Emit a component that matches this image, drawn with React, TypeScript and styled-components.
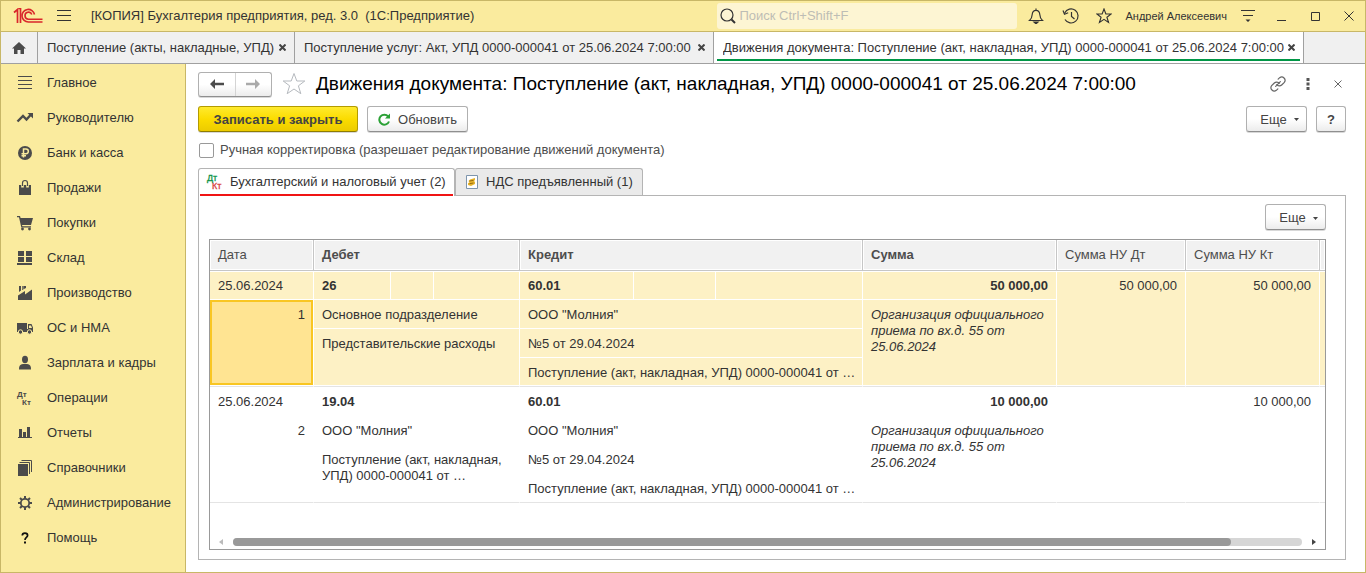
import React from "react";
import styled, { createGlobalStyle, css } from "styled-components";

const c = {
  yellow: "#faeb9e",
  frame: "#c8b767",
  ink: "#333333",
  icon: "#4b4b4b",
  grey: "#a0a0a0",
  line: "#b4b4b4",
  row: "#fdf1c5",
};

const GlobalStyle = createGlobalStyle`
  *, *::before, *::after { box-sizing: border-box; }
  body { margin: 0; background: #fff; }
  body, button, input { font-family: "Liberation Sans", Arial, sans-serif; font-size: 13px; line-height: 16px; color: ${c.ink}; }
  button { margin: 0; padding: 0; border: 0; background: none; cursor: pointer; }
  svg { display: block; flex: none; }
`;

const Window = styled.div`
  display: flex;
  flex-direction: column;
  min-height: 100vh;
  border: 1px solid ${c.frame};
  background: #fff;
`;

const TitleBar = styled.header`
  display: flex;
  align-items: center;
  height: 31px;
  padding-left: 12px;
  background: ${c.yellow};
  border-bottom: 1px solid ${c.frame};
`;

const IconButton = styled.button<{ $w?: number }>`
  display: flex;
  align-items: center;
  justify-content: center;
  width: ${(p) => p.$w ?? 34}px;
  height: 28px;
  flex: none;
`;

const AppTitle = styled.div`
  flex: 1;
  padding-left: 6px;
  white-space: nowrap;
`;

const Search = styled.label`
  display: flex;
  align-items: center;
  gap: 3px;
  width: 300px;
  height: 26px;
  padding: 0 3px;
  border-radius: 3px;
  background: #fdf5d3;
  input {
    flex: 1;
    min-width: 0;
    padding: 0;
    border: 0;
    outline: 0;
    background: none;
  }
  input::placeholder { color: #bdbdb5; opacity: 1; }
`;

const User = styled.button`
  font-size: 11px;
  padding: 0 4px;
  white-space: nowrap;
`;

const TabStrip = styled.nav`
  display: flex;
  height: 32px;
  background: #f0f0f0;
  border-bottom: 1px solid ${c.grey};
`;

const HomeTab = styled.button`
  display: flex;
  align-items: center;
  justify-content: center;
  width: 37px;
  border-right: 1px solid ${c.grey};
`;

const WindowTab = styled.div<{ $active?: boolean; $w: number }>`
  display: flex;
  align-items: center;
  justify-content: space-between;
  flex: 0 1 ${(p) => p.$w}px;
  padding: 0 3px;
  border-right: 1px solid ${c.grey};
  background: ${(p) => (p.$active ? "#fff" : "transparent")};
`;

const TabInner = styled.div<{ $active?: boolean }>`
  display: flex;
  align-items: center;
  justify-content: space-between;
  flex: 1;
  min-width: 0;
  height: 27px;
  padding: 2px 5px 0 6px;
  border-bottom: 2px solid ${(p) => (p.$active ? "#009646" : "transparent")};
  > button:first-child {
    overflow: hidden;
    white-space: nowrap;
  }
`;

const Body = styled.div`
  display: flex;
  flex: 1;
`;

const Sidebar = styled.nav`
  flex: 0 0 185px;
  padding-top: 1px;
  background: ${c.yellow};
  border-right: 1px solid ${c.frame};
`;

const SideItem = styled.a`
  display: flex;
  align-items: center;
  gap: 13px;
  height: 35px;
  padding-left: 15px;
  color: ${c.ink};
  text-decoration: none;
  white-space: nowrap;
`;

const Main = styled.main`
  display: flex;
  flex-direction: column;
  flex: 1;
  min-width: 0;
  padding: 7px 19px 12px 12px;
`;

const Bar = styled.div`
  display: flex;
  align-items: center;
`;

const HeadBar = styled(Bar)`
  height: 26px;
  margin-right: -7px;
`;

const CommandBar = styled(Bar)`
  gap: 9px;
  margin-top: 8px;
  height: 27px;
`;

const Spacer = styled.div`
  flex: 1;
`;

const raised = css`
  border: 1px solid #b0b0b0;
  border-bottom-color: #8f8f8f;
  border-radius: 3px;
  background: linear-gradient(#ffffff 50%, #ececec);
  box-shadow: 0 1px 0 #d8d8d8;
`;

const NavPair = styled.div`
  display: flex;
  width: 74px;
  height: 25px;
  ${raised}
  button {
    display: flex;
    flex: 1;
    align-items: center;
    justify-content: center;
  }
  button + button { border-left: 1px solid #d4d4d4; }
`;

const Title = styled.h1`
  margin: 0;
  font-size: 19px;
  line-height: 24px;
  font-weight: 400;
  color: #000;
  white-space: nowrap;
`;

const Button = styled.button<{ $w: number; $strong?: boolean }>`
  display: flex;
  align-items: center;
  justify-content: center;
  width: ${(p) => p.$w}px;
  height: 26px;
  padding-top: 2px;
  color: #444;
  white-space: nowrap;
  ${raised}
  ${(p) =>
    p.$strong &&
    css`
      font-weight: 700;
      border-color: #b39b00;
      border-bottom-color: #8f7c00;
      background: linear-gradient(#ffea2e, #fbdc00 50%, #eccb00);
    `}
`;

const CheckRow = styled.label`
  display: flex;
  align-items: center;
  gap: 6px;
  height: 36px;
  padding-left: 1px;
  color: #4d4d4d;
  input {
    appearance: none;
    width: 15px;
    height: 15px;
    margin: 0;
    border: 1px solid #999;
    border-radius: 2px;
    background: #fff;
  }
`;

const PageTabs = styled.div`
  display: flex;
  height: 27px;
`;

const PageTab = styled.button<{ $active?: boolean; $w: number }>`
  display: flex;
  align-items: center;
  gap: 6px;
  width: ${(p) => p.$w}px;
  height: ${(p) => (p.$active ? 28 : 27)}px;
  padding: ${(p) => (p.$active ? "0 1px" : "0 8px")};
  border: 1px solid ${c.line};
  border-bottom: 0;
  border-radius: 3px 3px 0 0;
  background: ${(p) => (p.$active ? "#fff" : "#eaeaea")};
  white-space: nowrap;
  z-index: 1;
`;

const PageTabInner = styled.span`
  display: flex;
  align-items: center;
  gap: 6px;
  flex: 1;
  height: 27px;
  padding: 0 6px;
  border-bottom: 2px solid #f01414;
`;

const Panel = styled.section`
  display: flex;
  flex-direction: column;
  flex: 1;
  padding: 8px 19px 9px 10px;
  border: 1px solid ${c.line};
`;

const PanelBar = styled.div`
  display: flex;
  justify-content: flex-end;
  margin-bottom: 9px;
`;

const Grid = styled.div`
  display: flex;
  flex-direction: column;
  flex: 1;
  border: 1px solid #999;
`;

const Table = styled.table`
  width: 100%;
  table-layout: fixed;
  border-collapse: separate;
  border-spacing: 0;
`;

const Col = styled.col<{ $w?: number }>`
  width: ${(p) => (p.$w ? `${p.$w}px` : "auto")};
`;

const Th = styled.th<{ $bold?: boolean }>`
  height: 31px;
  padding: 0 8px;
  text-align: left;
  font-weight: ${(p) => (p.$bold ? 700 : 400)};
  color: #4d4d4d;
  background: #f1f1f1;
  border-right: 1px solid #c6c6c6;
  border-bottom: 1px solid #c6c6c6;
  box-shadow: inset 0 0 0 1px #fff;
  white-space: nowrap;
  &:last-child { padding: 0; border-right: 0; }
`;

const Group = styled.tbody<{ $selected?: boolean }>`
  td {
    height: 29px;
    padding: 7px 8px 5px;
    vertical-align: top;
    overflow: hidden;
    border-right: 1px solid #fff;
    border-bottom: 1px solid #fff;
    background: ${(p) => (p.$selected ? c.row : "#fff")};
  }
  td:last-child[rowspan="4"] { padding: 0; border-right: 0; }
  td[data-end] {
    border-bottom-color: #e4e4e4;
    box-shadow: inset 0 -1px 0 #fff;
  }
  tr:first-child td { box-shadow: inset 0 1px 0 #fff; }
  tr:first-child td[data-end] { box-shadow: inset 0 1px 0 #fff, inset 0 -1px 0 #fff; }
  td[data-num] { text-align: right; }
  td[data-bold] { font-weight: 700; }
  td[data-note] { font-style: italic; }
  td[data-clip] { padding-right: 4px; white-space: nowrap; text-overflow: ellipsis; }
  td[data-current] { padding: 0; }
`;

const Current = styled.div`
  height: 85px;
  padding: 5px 6px;
  border: 2px solid #f9c622;
  background: #ffe492;
`;

const ScrollBar = styled.div`
  display: flex;
  align-items: center;
  justify-content: space-between;
  height: 15px;
  margin-top: auto;
  padding: 0 8px;
`;

const Track = styled.div`
  flex: 1;
  height: 8px;
  margin: 0 9px;
  border-radius: 4px;
  background: #d6d6d6;
`;

const Thumb = styled.div`
  height: 8px;
  border-radius: 4px;
  background: #999;
`;

const MoreLabel = styled.span`
  display: flex;
  align-items: center;
  gap: 7px;
  padding-left: 6px;
`;

const Stroke = ({ d, s = 18, w = 1, color = c.ink }: { d: string; s?: number; w?: number; color?: string }) => (
  <svg width={s} height={s} viewBox={`0 0 ${s} ${s}`} fill="none" stroke={color} strokeWidth={w}>
    <path d={d} />
  </svg>
);

const Caret = () => (
  <svg width="5" height="3" viewBox="0 0 5 3"><path d="M0 0h5L2.500 3z" fill="#444" /></svg>
);

const CloseMark = () => <Stroke s={7} w={2} color="#444" d="M.500.500l6 6M6.500.500l-6 6" />;

const Logo = () => (
  <svg width="30" height="16" viewBox="0 0 30 16" fill="none" stroke="#d9262b">
    <path d="M1 4.500L4.500 1.500V15M7.500 15V.500H5.500" strokeWidth="1.700" />
    <path d="M21.500 6.500A6.300 6.300 0 1 0 15.500 14H29.500" strokeWidth="1.600" />
    <path d="M18.800 6.500A3.500 3.500 0 1 0 15.500 11.200H29.500" strokeWidth="1.600" />
  </svg>
);

const DtKt = ({ a, b, light }: { a: string; b: string; light?: boolean }) => (
  <svg width="18" height="18" viewBox="0 0 18 18" fontFamily="Liberation Sans" fontWeight={light ? 400 : 700} fontSize={light ? 9 : 8}>
    <text x="1" y="8" fill={a} stroke={light ? a : "none"} strokeWidth=".3">Дт</text>
    <text x="6" y="16" fill={b} stroke={light ? b : "none"} strokeWidth=".3">Кт</text>
  </svg>
);

const Solid = ({ children }: { children: React.ReactNode }) => (
  <svg width="18" height="18" viewBox="0 0 18 18" fill={c.icon}>{children}</svg>
);

const sections: [string, React.ReactNode][] = [
  ["Главное", <Solid><path d="M2 2h14v1H2zM2 6h14v1H2zM2 10h14v1H2zM2 14h14v1H2z" /></Solid>],
  ["Руководителю", <Solid><path d="M1.500 12.500L7 7l3.500 3.500L15 5.500" fill="none" stroke={c.icon} strokeWidth="2.400" /><path d="M11.500 4h5.500v5.500z" /></Solid>],
  ["Банк и касса", <Solid><circle cx="9" cy="9" r="7" /><path d="M7.500 13.500V5H10a2.200 2.200 0 0 1 0 4.700H5.500M5.500 11.700H10" fill="none" stroke={c.yellow} strokeWidth="1.500" /></Solid>],
  ["Продажи", <Solid><path d="M3 6h12v10H3z" /><path d="M6.500 8.500V4a2.500 2.500 0 0 1 5 0v4.500" fill="none" stroke={c.yellow} strokeWidth="2.600" /><path d="M6.500 7V4a2.500 2.500 0 0 1 5 0v3" fill="none" stroke={c.icon} strokeWidth="1.200" /></Solid>],
  ["Покупки", <Solid><path d="M1 2h3l.6 2H17l-2 7H6l.4 1.200H15v1.200H5.300L3 3.200H1z" /><circle cx="6.500" cy="15" r="1.400" /><circle cx="13.500" cy="15" r="1.400" /></Solid>],
  ["Склад", <Solid><path d="M2 2h6v5H2zM10 2h6v5h-6zM2 8h6v5H2zM10 8h6v5h-6zM1 14h15v2H1z" /></Solid>],
  ["Производство", <Solid><path d="M2 11.500L9 7v3.500L16 5.500V16H2zM3 2h2v4.500L3 8zM6 2h4v2L6 6z" /><path d="M7 2v3" stroke={c.yellow} strokeWidth=".6" /></Solid>],
  ["ОС и НМА", <Solid><path d="M1 4h10v9H1zM12 5h3.500L17 8.500V13h-5z" /><path d="M10 10h3v3h-3z" /><circle cx="4.500" cy="13" r="2.200" stroke={c.yellow} /><circle cx="13.500" cy="13" r="2.200" stroke={c.yellow} /><path d="M13 6.500h2l1 2.500h-3z" fill={c.yellow} /></Solid>],
  ["Зарплата и кадры", <Solid><ellipse cx="9" cy="5.500" rx="3" ry="3.700" /><path d="M3 15.500c0-4 1-5 4-5.500h4c3 .5 4 1.500 4 5.500z" /></Solid>],
  ["Операции", <DtKt a={c.icon} b={c.icon} />],
  ["Отчеты", <Solid><path d="M2 13h14v1H2zM3 5h3v8H3zM7 8h3v5H7zM11 3h3v10h-3z" /></Solid>],
  ["Справочники", <Solid><path d="M2 5h10v12H2z" /><path d="M3.500 3.500h10V15M5.500 1.500h10V13" fill="none" stroke={c.icon} /></Solid>],
  ["Администрирование", <Solid><circle cx="9" cy="9" r="4.200" fill="none" stroke={c.icon} strokeWidth="1.800" /><path d="M9 2v3M9 13v3M2 9h3M13 9h3M4 4l2 2M12 12l2 2M14 4l-2 2M6 12l-2 2" stroke={c.icon} strokeWidth="2" /></Solid>],
  ["Помощь", <Solid><path d="M6.300 6.500c0-3.300 5.300-3.300 5.300 0C11.600 8.500 9 8.500 9 11" fill="none" stroke="#111" strokeWidth="1.700" /><path d="M8 12.500h2v2H8z" fill="#111" /></Solid>],
];

const openTabs = [
  { label: "Поступление (акты, накладные, УПД)", w: 257 },
  { label: "Поступление услуг: Акт, УПД 0000-000041 от 25.06.2024 7:00:00", w: 419 },
  { label: "Движения документа: Поступление (акт, накладная, УПД) 0000-000041 от 25.06.2024 7:00:00", w: 590, active: true },
];

const widths = [104, 77, 43, 86, 114, 82, undefined, 194, 129, 134, 5];
const starPath = "M12 1.500l2.800 7.500h8l-6.400 4.800 2.400 7.900L12 17l-6.800 4.700 2.400-7.900L1.200 9h8z";
const note = "Организация официального приема по вх.д. 55 от 25.06.2024";

function MoreButton() {
  return (
    <Button $w={61}>
      <MoreLabel>Еще <Caret /></MoreLabel>
    </Button>
  );
}

export default function App() {
  return (
    <Window>
      <GlobalStyle />
      <TitleBar>
        <Logo />
        <IconButton $w={42} aria-label="Меню">
          <Stroke s={14} d="M0 1.500h14M0 6.500h14M0 11.500h14" />
        </IconButton>
        <AppTitle>[КОПИЯ] Бухгалтерия предприятия, ред. 3.0&nbsp; (1С:Предприятие)</AppTitle>
        <Search>
          <svg width="16" height="16" viewBox="0 0 16 16" fill="none" stroke={c.ink}>
            <circle cx="7" cy="7" r="6" strokeWidth="1.200" />
            <path d="M11.500 11.500L15 15" strokeWidth="2" />
          </svg>
          <input placeholder="Поиск Ctrl+Shift+F" aria-label="Поиск" />
        </Search>
        <IconButton $w={38} aria-label="Уведомления">
          <svg width="16" height="16" viewBox="0 0 16 16" fill="none" stroke={c.ink} strokeWidth="1.200">
            <path d="M1.500 12.500c2-1.500 2.500-3 2.700-6C4.400 3.800 6 2.300 8 2.300s3.600 1.500 3.800 4.200c.2 3 .7 4.500 2.700 6zM8 .500v2" />
            <path d="M6 14h4l-2 1.800z" fill={c.ink} />
          </svg>
        </IconButton>
        <IconButton $w={32} aria-label="История">
          <svg width="18" height="18" viewBox="0 0 18 18" fill="none" stroke={c.ink} strokeWidth="1.200">
            <path d="M2.700 6A7 7 0 1 1 3 12.500M9.500 5v4.500l3 2.500" />
            <path d="M1 3.500l1.500 3.700 3.700-1.500" />
          </svg>
        </IconButton>
        <IconButton aria-label="Избранное">
          <svg width="16" height="16" viewBox="0 0 24 24" fill="none" stroke={c.ink} strokeWidth="1.700"><path d={starPath} /></svg>
        </IconButton>
        <User>Андрей Алексеевич</User>
        <IconButton aria-label="Настройки">
          <svg width="14" height="14" viewBox="0 0 14 14" fill={c.ink}><path d="M0 1h14v1H0zM2 6h10v1H2zM4.500 10.500h5L7 13z" /></svg>
        </IconButton>
        <IconButton aria-label="Свернуть"><Stroke s={10} d="M0 9.500h9" /></IconButton>
        <IconButton aria-label="Развернуть"><Stroke s={10} d="M.500 1.500h8v8h-8z" /></IconButton>
        <IconButton $w={32} aria-label="Закрыть"><Stroke s={10} d="M.500.500l9 9M9.500.500l-9 9" /></IconButton>
      </TitleBar>

      <TabStrip>
        <HomeTab aria-label="Начальная страница">
          <svg width="14" height="12" viewBox="0 0 14 12" fill={c.icon}><path d="M7 0l7 6.500h-2V12H8.500V8h-3v4H2V6.500H0z" /></svg>
        </HomeTab>
        {openTabs.map((t) => (
          <WindowTab key={t.label} $w={t.w} $active={t.active}>
            <TabInner $active={t.active}>
              <button>{t.label}</button>
              <button aria-label="Закрыть вкладку"><CloseMark /></button>
            </TabInner>
          </WindowTab>
        ))}
      </TabStrip>

      <Body>
        <Sidebar>
          {sections.map(([label, icon]) => (
            <SideItem href="#" key={label}>{icon}{label}</SideItem>
          ))}
        </Sidebar>

        <Main>
          <HeadBar>
            <NavPair>
              <button aria-label="Назад">
                <svg width="14" height="10" viewBox="0 0 14 10" fill={c.icon}><path d="M0 5l5-5v3.700h9v2.600H5V10z" /></svg>
              </button>
              <button aria-label="Вперед">
                <svg width="14" height="10" viewBox="0 0 14 10" fill="#aaa"><path d="M14 5L9 0v3.700H0v2.600h9V10z" /></svg>
              </button>
            </NavPair>
            <IconButton $w={44} aria-label="В избранное">
              <svg width="24" height="24" viewBox="0 0 24 24" fill="none" stroke="#b5b9be"><path d={starPath} /></svg>
            </IconButton>
            <Title>Движения документа: Поступление (акт, накладная, УПД) 0000-000041 от 25.06.2024 7:00:00</Title>
            <Spacer />
            <IconButton $w={30} aria-label="Ссылка">
              <svg width="16" height="16" viewBox="0 0 24 24" fill="none" stroke="#666" strokeWidth="1.800" strokeLinecap="round">
                <path d="M10 13a5 5 0 0 0 7.500.5l4-4a5 5 0 0 0-7-7l-2.300 2.200M14 11a5 5 0 0 0-7.500-.5l-4 4a5 5 0 0 0 7 7l2.300-2.200M8.500 15.500l7-7" />
              </svg>
            </IconButton>
            <IconButton $w={30} aria-label="Меню формы">
              <svg width="4" height="12" viewBox="0 0 4 12" fill="#555"><path d="M.500 0h3v3h-3zM.500 4.500h3v3h-3zM.500 9h3v3h-3z" /></svg>
            </IconButton>
            <IconButton $w={30} aria-label="Закрыть форму"><Stroke s={8} color="#666" d="M.500.500l7 7M7.500.500l-7 7" /></IconButton>
          </HeadBar>

          <CommandBar>
            <Button $w={160} $strong>Записать и закрыть</Button>
            <Button $w={101}>
              <Bar>
                <svg width="20" height="14" viewBox="0 0 20 14" fill="none" stroke="#2ba136" strokeWidth="2">
                  <path d="M10.200 3.500A5 5 0 1 0 11 8.500" />
                  <path d="M12 .500v5H7z" fill="#2ba136" stroke="none" />
                </svg>
                Обновить
              </Bar>
            </Button>
            <Spacer />
            <MoreButton />
            <Button $w={30} aria-label="Справка"><b>?</b></Button>
          </CommandBar>

          <CheckRow>
            <input type="checkbox" />
            Ручная корректировка (разрешает редактирование движений документа)
          </CheckRow>

          <PageTabs>
            <PageTab $w={257} $active>
              <PageTabInner>
                <DtKt a="#0b9347" b="#d9403c" light />
                Бухгалтерский и налоговый учет (2)
              </PageTabInner>
            </PageTab>
            <PageTab $w={188}>
              <svg width="16" height="16" viewBox="0 0 16 16">
                <path d="M2.500 1.500h11v13h-11z" fill="#fff" stroke="#7d95ad" />
                <path d="M6 5.500l5-1.500v2l-1 1 1 1v2l-4 2-3-1v-2l1.500-.5L4.500 7z" fill="#e6b32c" />
                <path d="M5.500 7l4-.7M5.500 9.700l4-.7" stroke="#9a6f10" />
              </svg>
              НДС предъявленный (1)
            </PageTab>
          </PageTabs>

          <Panel>
            <PanelBar><MoreButton /></PanelBar>
            <Grid>
              <Table>
                <colgroup>{widths.map((w, i) => <Col key={i} $w={w} />)}</colgroup>
                <thead>
                  <tr>
                    <Th>Дата</Th>
                    <Th $bold colSpan={3}>Дебет</Th>
                    <Th $bold colSpan={3}>Кредит</Th>
                    <Th $bold>Сумма</Th>
                    <Th>Сумма НУ Дт</Th>
                    <Th>Сумма НУ Кт</Th>
                    <Th />
                  </tr>
                </thead>
                <Group $selected>
                  <tr>
                    <td>25.06.2024</td>
                    <td data-bold>26</td><td /><td />
                    <td data-bold>60.01</td><td /><td />
                    <td data-num data-bold>50 000,00</td>
                    <td data-num data-end rowSpan={4}>50 000,00</td>
                    <td data-num data-end rowSpan={4}>50 000,00</td>
                    <td data-end rowSpan={4} />
                  </tr>
                  <tr>
                    <td data-num data-end data-current rowSpan={3}><Current>1</Current></td>
                    <td colSpan={3}>Основное подразделение</td>
                    <td colSpan={3}>ООО "Молния"</td>
                    <td data-note data-end rowSpan={3}>{note}</td>
                  </tr>
                  <tr>
                    <td data-end colSpan={3} rowSpan={2}>Представительские расходы</td>
                    <td colSpan={3}>№5 от 29.04.2024</td>
                  </tr>
                  <tr><td data-end data-clip colSpan={3}>Поступление (акт, накладная, УПД) 0000-000041 от …</td></tr>
                </Group>
                <Group>
                  <tr>
                    <td>25.06.2024</td>
                    <td data-bold colSpan={3}>19.04</td>
                    <td data-bold colSpan={3}>60.01</td>
                    <td data-num data-bold>10 000,00</td>
                    <td data-end rowSpan={4} />
                    <td data-num data-end rowSpan={4}>10 000,00</td>
                    <td data-end rowSpan={4} />
                  </tr>
                  <tr>
                    <td data-num data-end rowSpan={3}>2</td>
                    <td colSpan={3}>ООО "Молния"</td>
                    <td colSpan={3}>ООО "Молния"</td>
                    <td data-note data-end rowSpan={3}>{note}</td>
                  </tr>
                  <tr>
                    <td data-end colSpan={3} rowSpan={2}>Поступление (акт, накладная, УПД) 0000-000041 от …</td>
                    <td colSpan={3}>№5 от 29.04.2024</td>
                  </tr>
                  <tr><td data-end data-clip colSpan={3}>Поступление (акт, накладная, УПД) 0000-000041 от …</td></tr>
                </Group>
              </Table>
              <ScrollBar>
                <svg width="6" height="6" viewBox="0 0 6 6" fill="#bbb"><path d="M5 0v6L1 3z" /></svg>
                <Track><Thumb style={{ width: `${(998 / 1069) * 100}%` }} /></Track>
                <svg width="6" height="6" viewBox="0 0 6 6" fill="#444"><path d="M1 0v6l4-3z" /></svg>
              </ScrollBar>
            </Grid>
          </Panel>
        </Main>
      </Body>
    </Window>
  );
}
